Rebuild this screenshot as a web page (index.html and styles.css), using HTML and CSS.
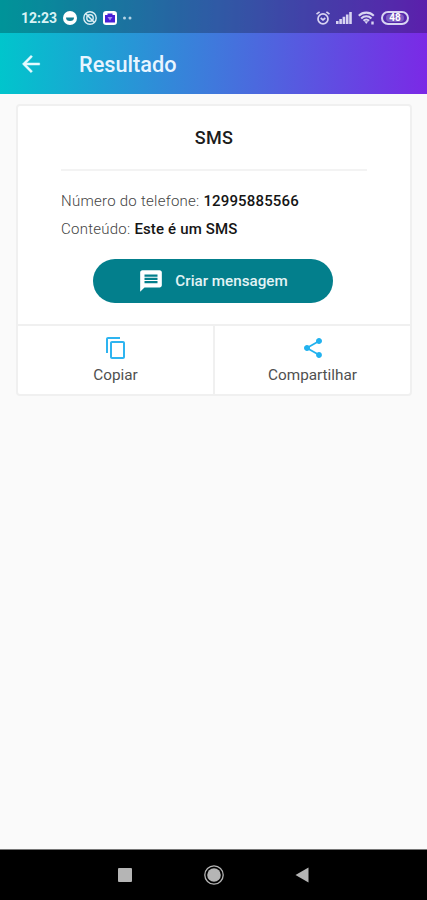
FILE: index.html
```html
<!DOCTYPE html>
<html lang="pt-BR">

<head>
    <meta charset="UTF-8">
    <meta name="viewport" content="width=device-width, initial-scale=1.0">
    <title>Resultado</title>
    <link rel="stylesheet" href="styles.css">
</head>

<body>
    <header class="header">
        <div class="status-bar">
            <span class="clock">12:23</span>
            <div class="notifications">
                <svg width="14" height="14" viewBox="0 0 14 14">
                    <circle cx="7" cy="7" r="7" fill="#fff"/>
                    <path d="M3 6.5h8a4 3.6 0 0 1-8 0z" fill="#147f92"/>
                </svg>
                <svg width="14" height="14" viewBox="0 0 14 14" fill="none" stroke="#dceef4">
                    <circle cx="7" cy="7" r="6.2" stroke-width="1.4"/>
                    <circle cx="7" cy="7" r="3.2" stroke-width="1.4"/>
                    <path d="M2.8 2.8l8.4 8.4" stroke-width="1.6"/>
                </svg>
                <svg width="14" height="14" viewBox="0 0 14 14">
                    <rect width="14" height="14" rx="3.2" fill="#fff"/>
                    <path d="M2 4h2.5V2.5h5V4H12v7.5H2z" fill="#4a1fd6"/>
                    <path d="M4.5 6h5L7 9.5z" fill="#a58af0"/>
                </svg>
                <svg width="9" height="14" viewBox="0 0 9 14" fill="#b5d3e4">
                    <circle cx="1.5" cy="7" r="1.5"/>
                    <circle cx="7" cy="7" r="1.5"/>
                </svg>
            </div>
            <div class="system-icons">
                <svg width="14" height="14" viewBox="0 0 14 14" fill="none" stroke="#d8d4f2" stroke-width="1.7">
                    <circle cx="7" cy="7.9" r="5"/>
                    <path d="M.5 3.2L3.6.8M13.5 3.2L10.4.8M4.7 7l2.3 1.8L9.3 7"/>
                </svg>
                <svg width="16" height="14" viewBox="0 0 16 14" fill="#d8d4f2">
                    <path d="M0 10h2.6v3H0zM3.3 8h2.6v5H3.3zM6.6 5.8h2.6V13H6.6zM9.9 3.4h2.6V13H9.9zM13.2 1h2.6v12h-2.6z"/>
                </svg>
                <svg width="17" height="14" viewBox="0 0 17 14" fill="none" stroke="#d8d4f2" stroke-width="2.1">
                    <path d="M.8 4.8c4.2-4.2 10.8-4.2 15 0M3.2 7.4c2.9-2.9 7.3-2.9 10.2 0M5.5 9.8c1.7-1.6 3.9-1.6 5.6 0"/>
                    <path d="M6.3 10.3L8.3 13l2-2.7z" fill="#d8d4f2" stroke="none"/>
                    <path d="M14.5 10.5v3" stroke-width="2.4"/>
                </svg>
                <span class="battery"><span class="battery-level">48</span></span>
            </div>
        </div>
        <div class="toolbar">
            <svg class="back-icon" width="26" height="26" viewBox="0 0 24 24" fill="#e4fbff" stroke="#e4fbff" stroke-width="0.4">
                <path d="M20 11H7.83l5.59-5.59L12 4l-8 8 8 8 1.41-1.41L7.83 13H20v-2z"/>
            </svg>
            <h1 class="title">Resultado</h1>
        </div>
    </header>

    <main class="content">
        <section class="card">
            <div class="card-body">
                <h2 class="card-title">SMS</h2>
                <p class="field">Número do telefone: <b>12995885566</b></p>
                <p class="field">Conteúdo: <b>Este é um SMS</b></p>
                <button class="message-button">
                    <svg width="26" height="26" viewBox="0 0 24 24" fill="#fff">
                        <path d="M20 2H4c-1.1 0-1.99.9-1.99 2L2 22l4-4h14c1.1 0 2-.9 2-2V4c0-1.1-.9-2-2-2zM6 12h12v2H6v-2zm0-3h12v2H6V9zm12-1H6V6h12v2z"/>
                    </svg>
                    <span>Criar mensagem</span>
                </button>
            </div>
            <div class="actions">
                <button class="action">
                    <svg width="24" height="24" viewBox="0 0 24 24" fill="#2eb4f0">
                        <path d="M16 1H4c-1.1 0-2 .9-2 2v14h2V3h12V1zm3 4H8c-1.1 0-2 .9-2 2v14c0 1.1.9 2 2 2h11c1.1 0 2-.9 2-2V7c0-1.1-.9-2-2-2zm0 16H8V7h11v14z"/>
                    </svg>
                    <span>Copiar</span>
                </button>
                <button class="action">
                    <svg width="24" height="24" viewBox="0 0 24 24" fill="#22b2ef">
                        <path d="M18 16.08c-.76 0-1.44.3-1.96.77L8.91 12.7c.05-.23.09-.46.09-.7s-.04-.47-.09-.7l7.05-4.11c.54.5 1.25.81 2.04.81 1.66 0 3-1.34 3-3s-1.34-3-3-3-3 1.34-3 3c0 .24.04.47.09.7L8.04 9.81C7.5 9.31 6.79 9 6 9c-1.66 0-3 1.34-3 3s1.34 3 3 3c.79 0 1.5-.31 2.04-.81l7.12 4.16c-.05.21-.08.43-.08.65 0 1.61 1.31 2.92 2.92 2.92s2.92-1.31 2.92-2.92-1.31-2.92-2.92-2.92z"/>
                    </svg>
                    <span>Compartilhar</span>
                </button>
            </div>
        </section>
    </main>

    <nav class="nav-bar">
        <svg width="14" height="14" viewBox="0 0 14 14"><rect width="14" height="14" rx="1" fill="#b5b5b5"/></svg>
        <svg width="20" height="20" viewBox="0 0 20 20">
            <circle cx="10" cy="10" r="9.2" fill="none" stroke="#b5b5b5" stroke-width="1.3"/>
            <circle cx="10" cy="10" r="6.8" fill="#b5b5b5"/>
        </svg>
        <svg width="14" height="16" viewBox="0 0 14 16"><path d="M13.5.5v15L.5 8z" fill="#b5b5b5"/></svg>
    </nav>
</body>

</html>
```

FILE: styles.css
```css
* {
    box-sizing: border-box;
}

body {
    display: flex;
    flex-direction: column;
    height: 100vh;
    margin: 0;
    background: #fafafa;
    color: #444;
    font-family: Roboto, sans-serif;
}

svg {
    display: block;
    flex: none;
}

button {
    border: none;
    background: none;
    padding: 0;
    font-family: inherit;
    cursor: pointer;
}

/* Header */
.header {
    height: 94px;
    background: linear-gradient(92deg, #00c6cc 0%, #3f79dc 50%, #7b29e6 100%);
}

.status-bar {
    display: flex;
    align-items: center;
    height: 33px;
    padding: 3px 18px 0 21px;
    background: rgba(0, 0, 0, 0.25);
}

.clock {
    width: 42px;
    color: #d9f3f5;
    font-size: 14px;
    font-weight: 700;
}

.notifications {
    display: flex;
    gap: 6px;
}

.system-icons {
    display: flex;
    align-items: center;
    gap: 6px;
    margin-left: auto;
}

.battery {
    width: 28px;
    height: 14px;
    padding: 1px 3px;
    border: 2px solid #d8d4f2;
    border-radius: 7px;
}

.battery-level {
    display: block;
    border-radius: 4px;
    background: rgba(216, 212, 242, 0.3);
    color: #fff;
    font-size: 10px;
    font-weight: 700;
    line-height: 8px;
    text-align: center;
}

.toolbar {
    display: flex;
    align-items: center;
    gap: 35px;
    height: 61px;
    padding-left: 18px;
}

.title {
    margin: 0;
    padding-top: 1px;
    color: #e8f5ff;
    font-size: 21.7px;
    font-weight: 500;
}

/* Result card */
.content {
    flex: 1;
    padding: 10px 15px 10px 16px;
}

.card {
    border: 2px solid #f0f0f0;
    border-radius: 4px;
    background: #fff;
}

.card-body {
    height: 218px;
    padding: 0 43px;
}

.card-title {
    height: 65px;
    margin: 0 0 16px;
    border-bottom: 2px solid #f3f3f3;
    color: #1c1c1c;
    font-size: 18px;
    font-weight: 500;
    letter-spacing: 0.3px;
    line-height: 63px;
    text-align: center;
}

.field {
    margin: 0;
    font-size: 15px;
    font-weight: 300;
    letter-spacing: 0.26px;
    line-height: 28px;
    white-space: nowrap;
}

.field b {
    color: #151515;
    font-weight: 500;
    letter-spacing: 0.15px;
}

.message-button {
    display: flex;
    align-items: center;
    justify-content: center;
    gap: 11px;
    width: 240px;
    height: 44px;
    margin: 16px auto 0 32px;
    border-radius: 22px;
    background: #037f8c;
    color: #e2f3f5;
    font-size: 15.2px;
    font-weight: 500;
}

.actions {
    display: flex;
    border-top: 2px solid #f0f0f0;
}

.action {
    display: flex;
    flex: 1;
    flex-direction: column;
    align-items: center;
    gap: 5px;
    height: 68px;
    padding-top: 10px;
    color: #505050;
    font-size: 15.3px;
    line-height: 20px;
}

.action + .action {
    border-left: 2px solid #f0f0f0;
}

/* Android navigation */
.nav-bar {
    display: flex;
    align-items: center;
    justify-content: space-between;
    height: 51px;
    padding: 0 118px;
    border-top: 1px solid #777;
    background: #000;
}
```
